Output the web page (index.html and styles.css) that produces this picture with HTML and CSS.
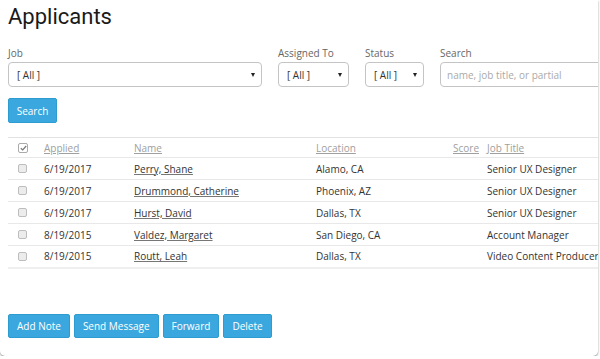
FILE: index.html
```html
<!DOCTYPE html>
<html lang="en">
<head>
    <meta charset="UTF-8">
    <meta name="viewport" content="width=device-width, initial-scale=1.0">
    <title>Applicants</title>
    <link rel="stylesheet" href="styles.css">
</head>
<body>
    <div class="card">
        <h1 class="title">Applicants</h1>

        <div class="filters">
            <div class="field job">
                <label>Job</label>
                <div class="select"><span>[ All ]</span><i class="arrow"></i></div>
            </div>
            <div class="field assigned">
                <label>Assigned To</label>
                <div class="select"><span>[ All ]</span><i class="arrow"></i></div>
            </div>
            <div class="field status">
                <label>Status</label>
                <div class="select"><span>[ All ]</span><i class="arrow"></i></div>
            </div>
            <div class="field search">
                <label>Search</label>
                <div class="input"><span class="placeholder">name, job title, or partial</span></div>
            </div>
        </div>

        <button class="btn">Search</button>

        <table class="applicants">
            <colgroup>
                <col class="c-check">
                <col class="c-applied">
                <col class="c-name">
                <col class="c-location">
                <col class="c-score">
                <col class="c-job">
            </colgroup>
            <thead>
                <tr>
                    <th class="check"><span class="box checked"><svg width="7" height="6" viewBox="0 0 7 6"><path d="M0.8 3.2 L2.7 4.9 L6.2 1" fill="none" stroke="#777" stroke-width="1.2"/></svg></span></th>
                    <th><a>Applied</a></th>
                    <th><a>Name</a></th>
                    <th><a>Location</a></th>
                    <th class="score"><a>Score</a></th>
                    <th class="job"><a>Job Title</a></th>
                </tr>
            </thead>
            <tbody>
                <tr>
                    <td class="check"><span class="box"></span></td>
                    <td>6/19/2017</td>
                    <td><a>Perry, Shane</a></td>
                    <td>Alamo, CA</td>
                    <td class="score"></td>
                    <td class="job">Senior UX Designer</td>
                </tr>
                <tr>
                    <td class="check"><span class="box"></span></td>
                    <td>6/19/2017</td>
                    <td><a>Drummond, Catherine</a></td>
                    <td>Phoenix, AZ</td>
                    <td class="score"></td>
                    <td class="job">Senior UX Designer</td>
                </tr>
                <tr>
                    <td class="check"><span class="box"></span></td>
                    <td>6/19/2017</td>
                    <td><a>Hurst, David</a></td>
                    <td>Dallas, TX</td>
                    <td class="score"></td>
                    <td class="job">Senior UX Designer</td>
                </tr>
                <tr>
                    <td class="check"><span class="box"></span></td>
                    <td>8/19/2015</td>
                    <td><a>Valdez, Margaret</a></td>
                    <td>San Diego, CA</td>
                    <td class="score"></td>
                    <td class="job">Account Manager</td>
                </tr>
                <tr>
                    <td class="check"><span class="box"></span></td>
                    <td>8/19/2015</td>
                    <td><a>Routt, Leah</a></td>
                    <td>Dallas, TX</td>
                    <td class="score"></td>
                    <td class="job">Video Content Producer</td>
                </tr>
            </tbody>
        </table>

        <div class="actions">
            <button class="btn">Add Note</button>
            <button class="btn">Send Message</button>
            <button class="btn">Forward</button>
            <button class="btn">Delete</button>
        </div>
    </div>
</body>
</html>
```

FILE: styles.css
```css
*{padding: 0; margin: 0; box-sizing: border-box;}
html, body {background: #fff; overflow: hidden;}
body {font-family: "Open Sans", "Liberation Sans", sans-serif; font-size: 10px; color: #333;}

.card {width: 598px; height: 356px; padding: 2px 0 0 8px; border-radius: 0 0 5px 5px; box-shadow: 0 1px 2px rgba(0,0,0,.45); overflow: hidden; background: #fff;}
.title {font-family: Roboto, "Liberation Sans", sans-serif; font-weight: 400; font-size: 22px; line-height: 30px; color: #1a1a1a;}

.filters {display: flex; gap: 16px; margin-top: 13px; width: 700px;}
.field label {display: block; line-height: 16px; height: 17px; color: #666;}
.field.job {width: 254px;}
.field.assigned {width: 71px;}
.field.status {width: 59px;}
.field.search {width: 200px;}
.select, .input {height: 25px; border: 1px solid #c4c4c4; border-radius: 4px; display: flex; align-items: center; justify-content: space-between; padding: 0 6px 0 8px; color: #333;}
.select .arrow {width: 0; height: 0; border-left: 2.5px solid transparent; border-right: 2.5px solid transparent; border-top: 4px solid #222;}
.input {padding-left: 6px;}
.input .placeholder {color: #aaa;}

.btn {display: inline-block; height: 25px; padding: 0 8px; background: #3aa8de; border: 1px solid #2f9ccf; border-radius: 2px; color: #fff; font-family: inherit; font-size: 10px;}
.filters + .btn {margin-top: 11px; width: 49px; padding: 0;}

.applicants {width: 610px; table-layout: fixed; border-collapse: collapse; margin-top: 14px; border-top: 1px solid #e2e2e2;}
.c-check {width: 28px;}
.c-applied {width: 90px;}
.c-name {width: 182px;}
.c-location {width: 126px;}
.c-score {width: 49px;}
.applicants th, .applicants td {text-align: left; font-weight: 400; padding: 0 0 0 8px; white-space: nowrap;}
.applicants th {height: 20px; border-bottom: 1px solid #e8e8e8;}
.applicants th a {color: #a0a0a0; text-decoration: underline;}
.applicants td {height: 22px; border-bottom: 1px solid #e8e8e8;}
.applicants tbody tr:last-child td {border-bottom: 2px solid #efefef;}
.applicants td a {color: #333; text-decoration: underline; text-decoration-color: #777;}
.applicants .check {padding-left: 10px;}
.applicants .score {text-align: right; padding: 0 4px 0 0;}
.applicants .job {padding-left: 4px;}

.box {display: block; width: 9px; height: 9px; border: 1px solid #bdbdbd; border-radius: 2px; background: #ececec;}
.box.checked {width: 10px; height: 10px; background: #fff; border-color: #aaa; display: flex; align-items: center; justify-content: center;}

.actions {display: flex; gap: 4px; margin-top: 45px;}
.actions .btn {height: 24px;}
```
